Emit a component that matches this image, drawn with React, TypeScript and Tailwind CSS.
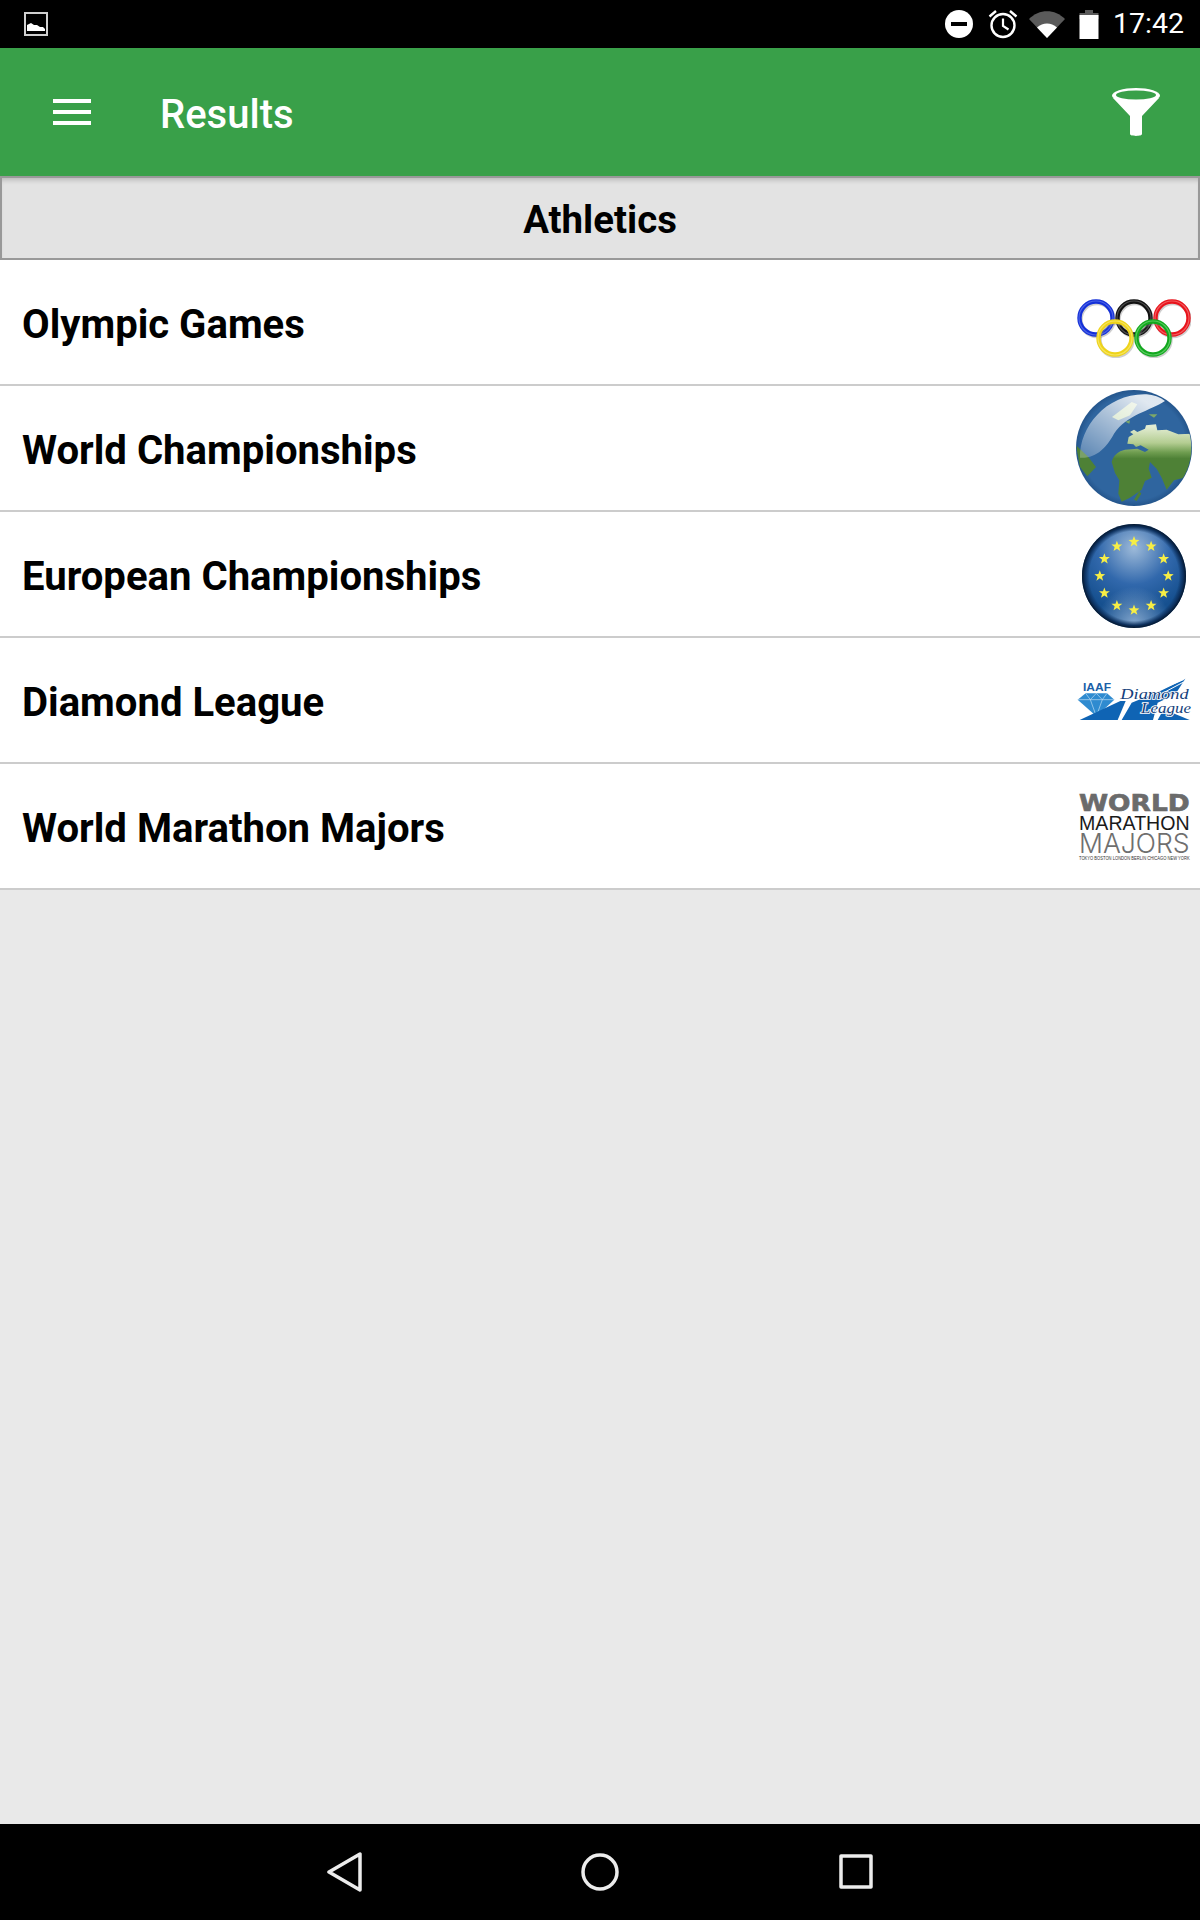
import React from 'react';

const rows = [
  { name: 'Olympic Games', logo: <OlympicLogo /> },
  { name: 'World Championships', logo: <GlobeLogo /> },
  { name: 'European Championships', logo: <EuropeLogo /> },
  { name: 'Diamond League', logo: <DiamondLogo /> },
  { name: 'World Marathon Majors', logo: <MarathonLogo /> },
];

function OlympicLogo() {
  const rings = [
    { x: 19, y: 20, color: '#1430d8', light: '#6f84f0' },
    { x: 57, y: 20, color: '#111111', light: '#777777' },
    { x: 95, y: 20, color: '#e8141c', light: '#f88a8a' },
    { x: 38, y: 40, color: '#eed31a', light: '#fbf08a' },
    { x: 76, y: 40, color: '#12a81e', light: '#84e088' },
  ];
  return (
    <svg width="114" height="60" viewBox="0 0 114 60" fill="none" className="mt-[11px]">
      {rings.map((r) => (
        <g key={r.color}>
          <circle cx={r.x + 1} cy={r.y + 1.5} r="16.5" stroke="#888" strokeOpacity="0.4" strokeWidth="4.5" />
          <circle cx={r.x} cy={r.y} r="16.5" stroke={r.color} strokeWidth="4.4" />
          <circle cx={r.x} cy={r.y} r="17" stroke={r.light} strokeOpacity="0.6" strokeWidth="1.2" />
        </g>
      ))}
    </svg>
  );
}

function GlobeLogo() {
  return (
    <svg width="116" height="116" viewBox="78 329 348 348">
      <defs>
        <linearGradient id="land" gradientUnits="userSpaceOnUse" x1="0" y1="440" x2="0" y2="535">
          <stop offset="0" stopColor="#e2ecd2" />
          <stop offset="0.5" stopColor="#b4cd92" />
          <stop offset="0.8" stopColor="#6f9d50" />
          <stop offset="1" stopColor="#4e8136" />
        </linearGradient>
        <linearGradient id="shine" gradientUnits="userSpaceOnUse" x1="250" y1="340" x2="120" y2="530">
          <stop offset="0" stopColor="#ffffff" stopOpacity="0.85" />
          <stop offset="1" stopColor="#ffffff" stopOpacity="0.25" />
        </linearGradient>
        <radialGradient id="globe-sea" gradientUnits="userSpaceOnUse" cx="252" cy="503" r="174">
          <stop offset="0.9" stopColor="#2f659f" />
          <stop offset="1" stopColor="#24558c" />
        </radialGradient>
        <clipPath id="globe-clip">
          <circle cx="252" cy="503" r="172" />
        </clipPath>
      </defs>
      <circle cx="252" cy="503" r="174" fill="url(#globe-sea)" />
      <g clipPath="url(#globe-clip)">
        <path
          d="M185 545 C190 525 205 512 225 508 L262 505 L285 515 L296 508 L272 495 L258 500 L250 492 L232 490 L236 470 L250 462 L240 455 L252 448 L262 455 L285 445 L288 435 L318 432 L322 450 L350 448 L385 462 L430 460 L430 565 L402 592 L372 600 L350 628 L335 592 L320 565 L300 545 L296 565 L305 592 L285 602 L275 628 L240 652 L215 664 L205 640 L208 600 L195 578 Z"
          fill="url(#land)"
        />
        <path d="M252 658 L268 632 L274 640 L260 662 Z" fill="#4e8136" />
        <path d="M78 495 L115 530 L138 560 L112 588 L90 560 Z" fill="#4e8136" />
        <path d="M186 410 L245 365 L262 372 L240 405 L205 420 Z" fill="#b9d3a0" />
        <path d="M296 402 L322 402 L312 412 Z" fill="#7ea868" />
        <path d="M226 424 L240 420 L238 430 Z" fill="#7ea868" />
        <path d="M90 532 C88 440 170 338 290 342 C310 344 330 350 345 362 C300 392 232 402 192 460 C170 500 140 535 90 532 Z" fill="url(#shine)" />
      </g>
    </svg>
  );
}

const stars = Array.from({ length: 12 }, (_, i) => {
  const a = (i * Math.PI) / 6;
  return { x: 253 + 102 * Math.sin(a), y: 193 - 102 * Math.cos(a) };
});

const starPoints = Array.from({ length: 10 }, (_, i) => {
  const a = (i * Math.PI) / 5;
  const r = i % 2 === 0 ? 17 : 7;
  return `${(r * Math.sin(a)).toFixed(1)},${(-r * Math.cos(a)).toFixed(1)}`;
}).join(' ');

function EuropeLogo() {
  return (
    <svg width="104" height="104" viewBox="98 38 310 310" className="mt-[3px]">
      <defs>
        <radialGradient id="eu-disc" gradientUnits="userSpaceOnUse" cx="253" cy="110" r="240">
          <stop offset="0" stopColor="#9dbad9" />
          <stop offset="0.45" stopColor="#3168ac" />
          <stop offset="0.8" stopColor="#16508f" />
          <stop offset="1" stopColor="#16508f" />
        </radialGradient>
        <radialGradient id="eu-bottom" gradientUnits="userSpaceOnUse" cx="253" cy="335" r="110">
          <stop offset="0" stopColor="#9dbbdc" stopOpacity="0.8" />
          <stop offset="1" stopColor="#9dbbdc" stopOpacity="0" />
        </radialGradient>
        <radialGradient id="eu-rim" gradientUnits="userSpaceOnUse" cx="253" cy="193" r="155">
          <stop offset="0.86" stopColor="#0c2f5c" stopOpacity="0" />
          <stop offset="0.95" stopColor="#0c2f5c" />
          <stop offset="1" stopColor="#06172c" />
        </radialGradient>
      </defs>
      <circle cx="253" cy="193" r="155" fill="url(#eu-disc)" />
      <circle cx="253" cy="193" r="155" fill="url(#eu-bottom)" />
      <circle cx="253" cy="193" r="155" fill="url(#eu-rim)" />
      {stars.map((s) => (
        <polygon key={`${s.x}-${s.y}`} points={starPoints} transform={`translate(${s.x} ${s.y})`} fill="#f7ee45" />
      ))}
    </svg>
  );
}

function DiamondLogo() {
  return (
    <svg width="115" height="45" viewBox="50 50 345 135" className="mb-[3px] overflow-visible">
      <text x="68" y="95" fontFamily="Liberation Sans, sans-serif" fontWeight="700" fontSize="30" fill="#1a5fa8" textLength="84" lengthAdjust="spacingAndGlyphs">
        IAAF
      </text>
      <path d="M52 121 L76 102 L140 102 L162 121 L108 171 Z" fill="#2f8bd0" />
      <path d="M52 121 H162 M76 102 L90 121 L108 171 L126 121 L140 102 M90 121 L108 102 L126 121" stroke="#bfe0f5" strokeWidth="2" fill="none" />
      <path d="M58 182 L180 125 L196 125 L172 182 Z" fill="#0f64b4" />
      <path d="M184 182 L214 130 L300 95 L375 58 L345 105 L292 130 L278 182 Z" fill="#0f64b4" />
      <path d="M292 182 L310 150 L388 182 Z" fill="#0f64b4" />
      <path d="M296 92 L372 60 M310 100 L370 68" stroke="#ffffff" strokeWidth="3" fill="none" />
      <text x="180" y="118" fontFamily="Liberation Serif, serif" fontStyle="italic" fontSize="46" fill="#153f7c" stroke="#ffffff" strokeWidth="5" paintOrder="stroke" textLength="205" lengthAdjust="spacingAndGlyphs">
        Diamond
      </text>
      <text x="242" y="160" fontFamily="Liberation Serif, serif" fontStyle="italic" fontSize="46" fill="#153f7c" stroke="#ffffff" strokeWidth="5" paintOrder="stroke" textLength="150" lengthAdjust="spacingAndGlyphs">
        League
      </text>
    </svg>
  );
}

function MarathonLogo() {
  return (
    <svg width="111" height="69" viewBox="58 65 333 207" className="overflow-visible">
      <text x="58" y="122" fontFamily="DejaVu Sans, sans-serif" fontWeight="700" fontSize="70" fill="#6b6b6b" textLength="332" lengthAdjust="spacingAndGlyphs" stroke="#6b6b6b" strokeWidth="2">
        WORLD
      </text>
      <text x="58" y="178" fontFamily="Liberation Sans, sans-serif" fontSize="62" fill="#1a1a1a" textLength="332" lengthAdjust="spacingAndGlyphs">
        MARATHON
      </text>
      <text x="58" y="248" fontFamily="Inter, sans-serif" fontWeight="300" fontSize="82" fill="#6f6f6f" textLength="332" lengthAdjust="spacingAndGlyphs">
        MAJORS
      </text>
      <text x="58" y="268" fontFamily="Liberation Sans, sans-serif" fontSize="14" fill="#333333" textLength="332" lengthAdjust="spacingAndGlyphs">
        TOKYO BOSTON LONDON BERLIN CHICAGO NEW YORK
      </text>
    </svg>
  );
}

function StatusIcons() {
  return (
    <div className="flex items-center">
      <svg width="28" height="28" viewBox="0 0 28 28" className="mr-[15px]">
        <circle cx="14" cy="14" r="14" fill="#fff" />
        <rect x="6" y="12" width="16" height="4" fill="#000" />
      </svg>
      <svg width="30" height="30" viewBox="0 0 30 30" fill="none" stroke="#fff" className="mr-[11px]">
        <circle cx="15" cy="16.5" r="11.5" strokeWidth="2.4" />
        <path d="M15 9.5 V17 L20.5 20.5" strokeWidth="2.2" />
        <path d="M1.5 7.5 L8 2 M28.5 7.5 L22 2" strokeWidth="2.4" />
      </svg>
      <svg width="36" height="28" viewBox="0 0 36 28" className="mr-[14px]">
        <path d="M0 9 C10 -1.5 26 -1.5 36 9 L18 28 Z" fill="#5a5a5a" />
        <path d="M8 17.5 C14 12 22 12 28 17.5 L18 28 Z" fill="#fff" />
      </svg>
      <svg width="20" height="29" viewBox="0 0 20 29" className="mr-[14px]">
        <path d="M6 0 H14 V3 H19.5 V9 H0.5 V3 H6 Z" fill="#5a5a5a" />
        <path d="M0.5 5 H19.5 V29 H0.5 Z" fill="#fff" />
      </svg>
    </div>
  );
}

export default function App() {
  return (
    <div className="flex h-[1920px] w-[1200px] flex-col bg-[#e9e9e9] font-['Roboto',sans-serif]">
      {/* status bar */}
      <div className="flex h-[48px] shrink-0 items-center justify-between bg-black pl-[24px] pr-[16px]">
        <svg width="24" height="24" viewBox="0 0 24 24" fill="none">
          <rect x="1" y="1" width="22" height="22" stroke="#d0d0d0" strokeWidth="2" />
          <path d="M3 19 V13 L7 11 L10 13 L13 13 L16 15 L19 15 L21 17 V19 Z" fill="#fff" />
        </svg>
        <div className="flex items-center">
          <StatusIcons />
          <span className="text-[28.5px] leading-none text-white">17:42</span>
        </div>
      </div>

      {/* app bar */}
      <div className="flex h-[128px] shrink-0 items-center bg-[#39a049] pl-[53px] pr-[40px]">
        <div className="flex w-[38px] flex-col gap-[7px]">
          <div className="h-[4px] bg-white" />
          <div className="h-[4px] bg-white" />
          <div className="h-[4px] bg-white" />
        </div>
        <h1 className="ml-[69px] flex-1 pt-[5px] text-[40px] font-medium leading-none text-white">Results</h1>
        <svg width="48" height="48" viewBox="0 0 48 48">
          <ellipse cx="24" cy="7.5" rx="24" ry="7.5" fill="#fff" />
          <path d="M1 10 H47 L30 28 V46 C30 48.5 18 48.5 18 46 V28 Z" fill="#fff" />
          <ellipse cx="24" cy="7" rx="20" ry="4.5" fill="#39a049" />
        </svg>
      </div>

      {/* section header */}
      <div className="flex h-[84px] shrink-0 items-center justify-center border-2 border-[#999999] bg-[#e3e3e3] shadow-[inset_0_5px_5px_-3px_rgba(0,0,0,0.2)]">
        <h2 className="pt-[4px] text-[38.4px] font-bold text-black">Athletics</h2>
      </div>

      {/* competitions */}
      <div className="bg-white">
        {rows.map((row) => (
          <div key={row.name} className="flex h-[126px] items-center justify-between border-b-2 border-[#cccccc] pl-[22px] pr-[8px]">
            <span className="pt-[6px] text-[40.1px] font-bold text-black">{row.name}</span>
            <div className="flex w-[116px] justify-center">{row.logo}</div>
          </div>
        ))}
      </div>

      <div className="flex-1" />

      {/* nav bar */}
      <div className="flex h-[96px] shrink-0 items-center justify-center gap-[218px] bg-black">
        <svg width="38" height="40" viewBox="0 0 38 40" fill="none" stroke="#ececec" strokeWidth="3.5" strokeLinejoin="round">
          <path d="M35 2 V38 L4 20 Z" />
        </svg>
        <svg width="38" height="40" viewBox="0 0 38 40" fill="none" stroke="#ececec" strokeWidth="3.5">
          <circle cx="19" cy="20" r="17" />
        </svg>
        <svg width="38" height="40" viewBox="0 0 38 40" fill="none" stroke="#ececec" strokeWidth="3.5" strokeLinejoin="round">
          <rect x="4" y="4" width="30" height="31" />
        </svg>
      </div>
    </div>
  );
}
